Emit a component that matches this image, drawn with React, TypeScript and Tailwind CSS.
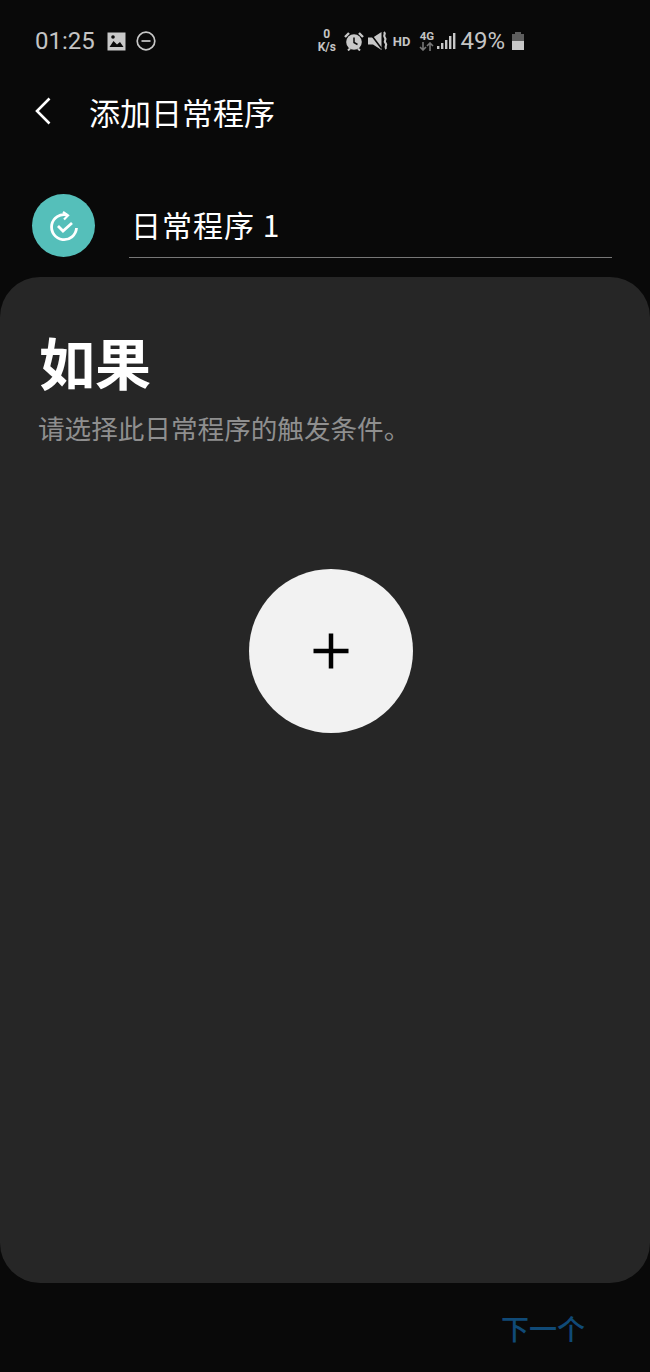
const cjk = { fontFamily: '"Noto Sans CJK SC", "Noto Sans", sans-serif' };
function StatusLeft() {
  return (
    <div className="flex items-center">
      <span className="text-[24px] leading-none text-[#c4c4c4] font-['Roboto',sans-serif]">01:25</span>
      <svg className="ml-[12px]" width="19" height="19" viewBox="0 0 19 19">
        <path d="M0.5 0.5h18v18H0.5z" fill="#c8c8c8" />
        <path d="M2.5 15l4-6 3.5 3.5 3-2.5 3.5 5z" fill="#0a0a0a" />
        <circle cx="6" cy="5" r="1.8" fill="#0a0a0a" />
      </svg>
      <svg className="ml-[10px]" width="20" height="20" viewBox="0 0 20 20" fill="none" stroke="#c8c8c8" strokeWidth="1.7">
        <circle cx="10" cy="10" r="8.8" />
        <path d="M5.5 10h9" />
      </svg>
    </div>
  );
}
function StatusRight() {
  return (
    <div className="mb-[-1px] flex items-center text-[#c4c4c4] font-['Roboto',sans-serif]">
      <div className="flex w-[22px] flex-col items-center text-[12px] font-bold leading-[13px]">
        <span>0</span>
        <span>K/s</span>
      </div>
      <svg className="ml-[6px]" width="20" height="20" viewBox="0 0 20 20">
        <circle cx="10" cy="11" r="7.8" fill="#c8c8c8" />
        <path d="M10 6.5v5l3.5 2" fill="none" stroke="#0a0a0a" strokeWidth="1.5" />
        <path d="M1 6l4-4M19 6l-4-4" stroke="#c8c8c8" strokeWidth="2.4" />
        <path d="M4 19.5l2-2M16 19.5l-2-2" stroke="#c8c8c8" strokeWidth="2" />
      </svg>
      <svg className="ml-[4px]" width="20" height="20" viewBox="0 0 20 20">
        <path d="M0 6.5h5l8.5-5.5v18l-8.5-5.5h-5z" fill="#c8c8c8" />
        <path d="M1.5 1.5l12 16" stroke="#0a0a0a" strokeWidth="1.6" />
        <path d="M16 1c2.5 2.5-1.5 3 .8 5.5s-1.6 3 .7 5.5-1.5 3 .6 6" fill="none" stroke="#c8c8c8" strokeWidth="2.2" />
      </svg>
      <span className="ml-[5px] text-[13px] font-bold leading-none">HD</span>
      <div className="ml-[9px] flex w-[15px] flex-col items-center">
        <span className="text-[11.5px] font-bold leading-[11px]">4G</span>
        <svg width="15" height="9" viewBox="0 0 15 9" fill="none" stroke="#777" strokeWidth="1.6">
          <path d="M4 0v8M1 5l3 3 3-3M11 9V1M8 4l3-3 3 3" />
        </svg>
      </div>
      <svg className="ml-[3px]" width="19" height="20" viewBox="0 0 19 20" fill="#c8c8c8">
        <rect x="0" y="15" width="2.4" height="3" />
        <rect x="4" y="12" width="2.4" height="6" />
        <rect x="8" y="9" width="2.4" height="9" />
        <rect x="12" y="5" width="2.4" height="13" />
        <rect x="16" y="2" width="2.4" height="16" />
      </svg>
      <span className="ml-[4px] text-[24px] leading-none">49%</span>
      <svg className="ml-[6px]" width="14" height="20" viewBox="0 0 14 20">
        <path d="M4 1h6v2h3v16H1V3h3z" fill="#5e5e5e" />
        <path d="M1 10h12v9H1z" fill="#c8c8c8" />
      </svg>
    </div>
  );
}
export default function App() {
  return (
    <div className="flex h-[1372px] w-[650px] flex-col overflow-hidden bg-[#090909]" style={cjk}>
      <div className="flex h-[53px] items-end justify-between pl-[35px] pr-[125px]">
        <StatusLeft />
        <StatusRight />
      </div>
      <div className="mt-[28px] flex h-[60px] items-center pl-[33px]">
        <svg width="20" height="32" viewBox="0 0 20 32" fill="none" stroke="#fff" strokeWidth="2.6">
          <path d="M16.5 3.5L4 16l12.5 12.5" />
        </svg>
        <span className="ml-[36px] text-[31px] leading-none text-white">添加日常程序</span>
      </div>
      <div className="mt-[23px] flex h-[80px] items-start pl-[32px] pr-[38px]">
        <div className="mt-[30px] flex h-[63px] w-[63px] items-center justify-center rounded-full bg-[#55bfba]">
          <svg width="34" height="34" viewBox="0 0 34 34" fill="none" stroke="#fff" strokeWidth="2.8">
            <path d="M20 6A12.5 12.5 0 1 0 29.5 19" />
            <path d="M16 3l5 3.5-4 4" strokeWidth="2.2" />
            <path d="M11 17l5 5 9-8" />
          </svg>
        </div>
        <div className="ml-[34px] mt-[30px] flex h-[64px] flex-1 items-center border-b border-[#777] pb-[4px] pl-[2px]">
          <span className="text-[30px] leading-none tracking-[1px] text-white">日常程序 1</span>
        </div>
      </div>
      <div className="mt-[33px] flex h-[1006px] flex-col rounded-[40px] bg-[#262626] pl-[39px]">
        <h1 className="mt-[49px] text-[56px] font-bold leading-[70px] text-white">如果</h1>
        <p className="mt-[14px] ml-[-1px] text-[26.6px] leading-[36px] text-[#8f8f8f]">请选择此日常程序的触发条件。</p>
        <div className="ml-[210px] mt-[123px] flex h-[164px] w-[164px] items-center justify-center rounded-full bg-[#f2f2f2]">
          <svg width="36" height="36" viewBox="0 0 36 36" stroke="#000" strokeWidth="4.5">
            <path d="M18 0.5v35M0.5 18h35" />
          </svg>
        </div>
      </div>
      <div className="flex flex-1 items-center justify-end pr-[65px]">
        <span className="text-[28px] font-medium leading-none text-[#104a77]">下一个</span>
      </div>
    </div>
  );
}
